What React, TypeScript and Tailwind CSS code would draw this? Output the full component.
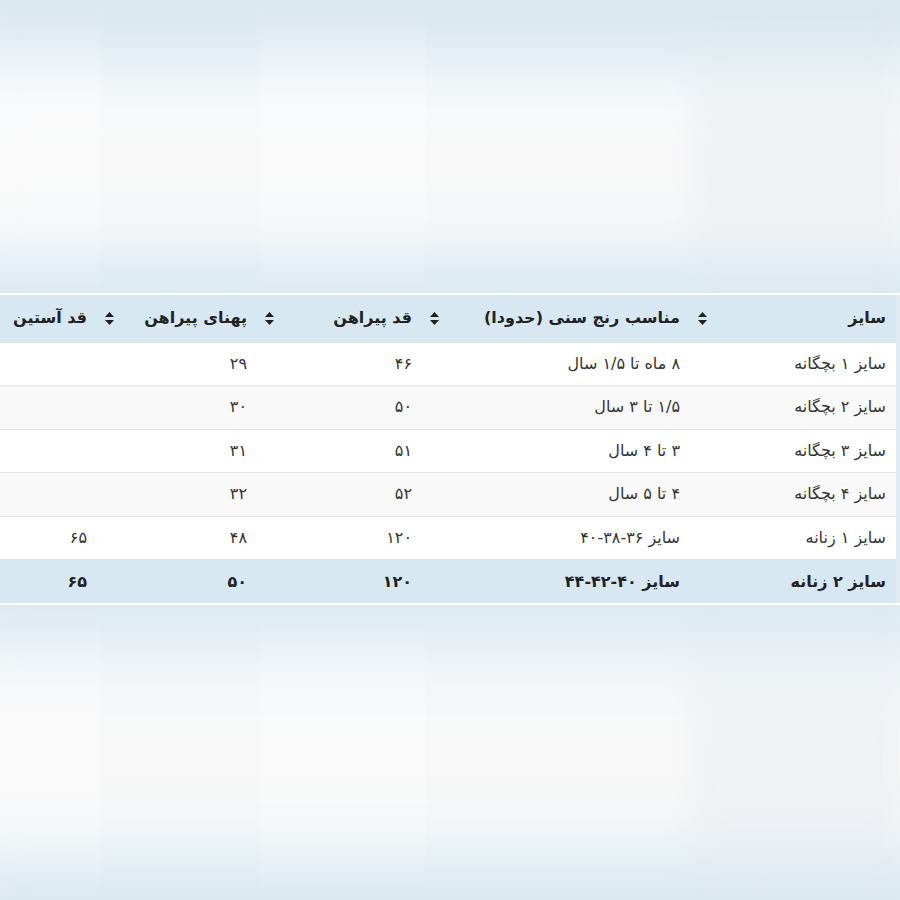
import React from "react";

const font = { fontFamily: '"DejaVu Sans", "Noto Sans", sans-serif' };

function SortIcon() {
  return (
    <svg width="9" height="13" viewBox="0 0 9 13" className="shrink-0">
      <path d="M4.5 0 L9 5 L0 5 Z" fill="#222" />
      <path d="M0 8 L9 8 L4.5 13 Z" fill="#222" />
    </svg>
  );
}

const headers = ["سایز", "مناسب رنج سنی (حدودا)", "قد پیراهن", "پهنای پیراهن", "قد آستین"];
const widths = ["w-[206px]", "w-[268px]", "w-[165px]", "w-[160px]", "w-[120px]"];

const rows = [
  ["سایز ۱ بچگانه", "۸ ماه تا ۱/۵ سال", "۴۶", "۲۹", ""],
  ["سایز ۲ بچگانه", "۱/۵ تا ۳ سال", "۵۰", "۳۰", ""],
  ["سایز ۳ بچگانه", "۳ تا ۴ سال", "۵۱", "۳۱", ""],
  ["سایز ۴ بچگانه", "۴ تا ۵ سال", "۵۲", "۳۲", ""],
  ["سایز ۱ زنانه", "سایز ۳۶-۳۸-۴۰", "۱۲۰", "۴۸", "۶۵"],
  ["سایز ۲ زنانه", "سایز ۴۰-۴۲-۴۴", "۱۲۰", "۵۰", "۶۵"],
];

function Blurred({ top }: { top: boolean }) {
  return (
    <div className="relative h-full w-full overflow-hidden">
      <div
        className={
          top
            ? "absolute -inset-10 blur-xl bg-[linear-gradient(to_bottom,#e2edf3_0%,#d6e4ec_14%,#e6f0f6_26%,#f8f9fa_38%,#f7f7f7_70%,#e4eff6_82%,#d2e2ec_96%,#dbe8f0_100%)]"
            : "absolute -inset-10 blur-xl bg-[linear-gradient(to_bottom,#d4e4ee_0%,#dce9f1_12%,#ecf3f8_24%,#f8f8f8_38%,#f7f7f7_66%,#e8f1f7_78%,#d8e6ef_90%,#d4e3ed_100%)]"
        }
      />
      <div className="absolute inset-0 flex">
        <div className="w-[100px] h-full bg-[linear-gradient(to_bottom,transparent_0%,rgba(255,255,255,0.35)_40%,rgba(255,255,255,0.35)_60%,transparent_100%)]" />
        <div className="w-[160px]" />
        <div className="w-[165px] h-full bg-[linear-gradient(to_bottom,transparent_0%,rgba(255,255,255,0.3)_40%,rgba(255,255,255,0.3)_60%,transparent_100%)]" />
        <div className="w-[268px]" />
        <div className="flex-1 h-full bg-[linear-gradient(to_bottom,transparent_0%,rgba(225,230,234,0.35)_45%,rgba(225,230,234,0.35)_65%,transparent_100%)] blur-md" />
      </div>
    </div>
  );
}

export default function App() {
  return (
    <div className="w-[900px] h-[900px] flex flex-col bg-[#eef4f8] overflow-hidden" style={font}>
      <div className="h-[293px] shrink-0">
        <Blurred top />
      </div>
      <div className="h-[2px] bg-white shrink-0" />
      <div className="flex shrink-0 bg-[#dfeaf1]">
        <div className="w-[896px] overflow-hidden" dir="rtl">
          <table className="table-fixed w-[919px] border-collapse text-[#333]">
            <thead>
              <tr className="bg-[#d7e8f3]">
                {headers.map((h, i) => (
                  <th key={i} className={`${widths[i]} h-[47px] pr-[10px] pl-[8px] text-right font-bold text-[16px] text-[#222]`}>
                    <div className="flex items-center justify-between whitespace-nowrap">
                      <span>{h}</span>
                      <SortIcon />
                    </div>
                  </th>
                ))}
              </tr>
            </thead>
            <tbody>
              {rows.map((r, ri) => {
                const last = ri === rows.length - 1;
                const bg = last ? "bg-[#d7e8f3]" : ri % 2 === 0 ? "bg-white" : "bg-[#f9f9f9]";
                return (
                  <tr key={ri} className={`${bg} border-t border-[#e2e2e2]`}>
                    {r.map((c, ci) => (
                      <td
                        key={ci}
                        className={`h-[43.5px] pr-[10px] pl-[8px] text-right whitespace-nowrap text-[16px] ${last ? "font-bold text-[#222]" : "text-[#333]"}`}
                      >
                        {c}
                      </td>
                    ))}
                  </tr>
                );
              })}
            </tbody>
          </table>
        </div>
        <div className="flex-1" />
      </div>
      <div className="h-[2px] bg-white shrink-0" />
      <div className="flex-1">
        <Blurred top={false} />
      </div>
    </div>
  );
}
